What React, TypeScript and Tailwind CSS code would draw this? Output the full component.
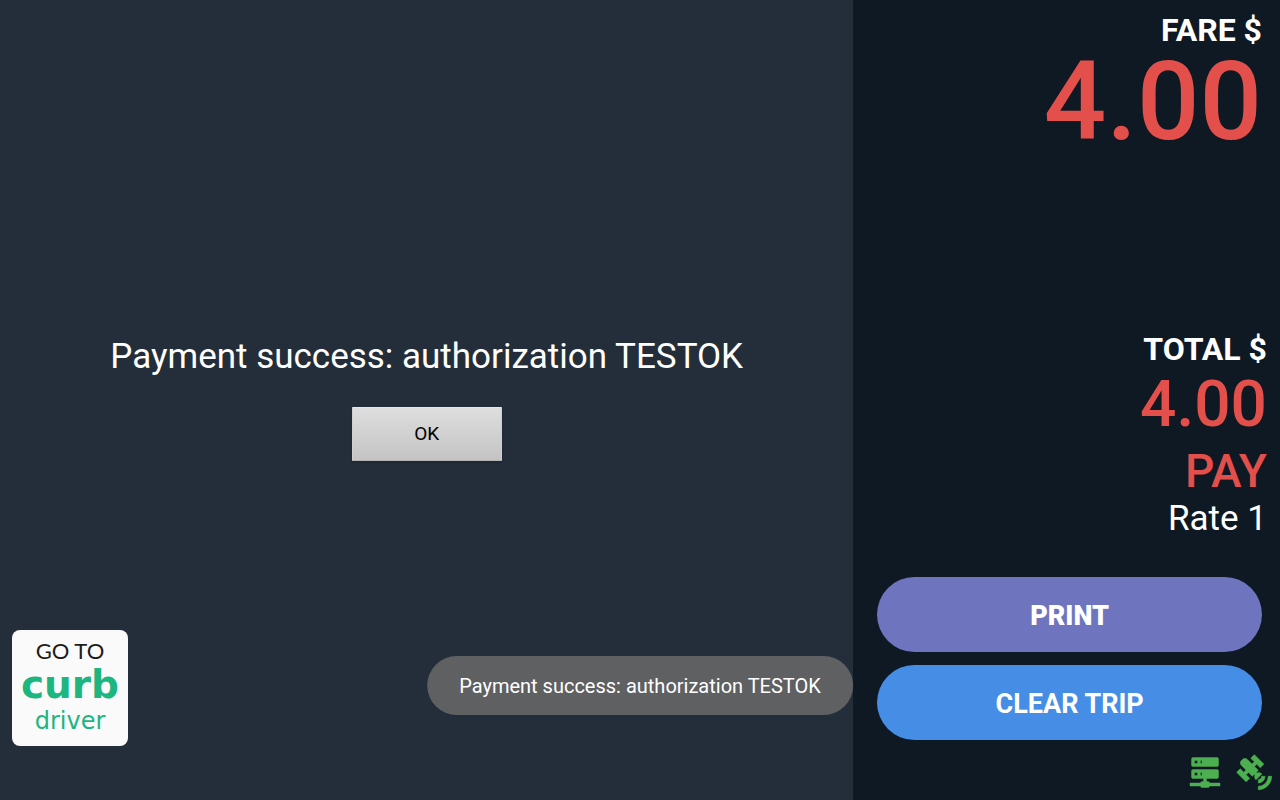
const MESSAGE = 'Payment success: authorization TESTOK';

const ServerIcon = () => (
  <svg viewBox="0 0 24 24" className="h-9 w-9" fill="currentColor" stroke="currentColor" strokeWidth="0.3" aria-hidden="true">
    <path d="M13,19H14A1,1 0 0,1 15,20H22V22H15A1,1 0 0,1 14,23H10A1,1 0 0,1 9,22H2V20H9A1,1 0 0,1 10,19H11V17H4A1,1 0 0,1 3,16V12A1,1 0 0,1 4,11H20A1,1 0 0,1 21,12V16A1,1 0 0,1 20,17H13V19M4,3H20A1,1 0 0,1 21,4V8A1,1 0 0,1 20,9H4A1,1 0 0,1 3,8V4A1,1 0 0,1 4,3M9,7H10V5H9V7M9,15H10V13H9V15M5,5V7H7V5H5M5,13V15H7V13H5Z" />
  </svg>
);

const SatelliteIcon = () => (
  <svg viewBox="0 0 24 24" className="h-10 w-10" fill="currentColor" stroke="currentColor" strokeWidth="0.4" aria-hidden="true">
    <path d="M11.62,1L17.28,6.67L15.16,8.79L13.04,6.67L11.62,8.09L13.95,10.41L12.79,11.58L13.24,12.04C14.17,11.61 15.31,11.77 16.07,12.54L12.54,16.07C11.77,15.31 11.61,14.17 12.04,13.24L11.58,12.79L10.41,13.95L8.09,11.62L6.67,13.04L8.79,15.16L6.67,17.28L1,11.62L3.14,9.5L5.26,11.62L6.67,10.21L3.84,7.38C3.06,6.6 3.06,5.33 3.84,4.55L4.55,3.84C5.33,3.06 6.6,3.06 7.38,3.84L10.21,6.67L11.62,5.26L9.5,3.14L11.62,1M18,14A4,4 0 0,1 14,18V16A2,2 0 0,0 16,14H18M22,14A8,8 0 0,1 14,22V20A6,6 0 0,0 20,14H22Z" />
  </svg>
);

const DriverLink = () => (
  <a
    href="#driver"
    className="flex h-[116px] w-[116px] flex-col items-center rounded-lg bg-[#fafafa] pt-[9px] text-[#1db580]"
  >
    <span className="font-['Lato',sans-serif] text-[22px] leading-6 text-[#1c1c1c]">GO TO</span>
    <span className="font-['DejaVu_Sans',sans-serif] text-[39px] leading-11 font-bold">curb</span>
    <span className="font-['DejaVu_Sans',sans-serif] text-2xl leading-7">driver</span>
  </a>
);

const PaymentPanel = () => (
  <main className="grid grid-rows-[1fr_auto_1fr] bg-[#242e3a] px-3 pb-1">
    <div />
    <div className="flex flex-col items-center gap-7">
      <p className="text-[35px] leading-11">{MESSAGE}</p>
      <button
        type="button"
        className="h-[54px] w-[150px] rounded-[1px] border border-x-[#d0d0d0] border-t-[#e6e6e6] border-b-[#b4b4b4] bg-linear-to-b from-[#dedede] to-[#c4c4c4] text-[19px] text-black shadow-sm"
      >
        OK
      </button>
    </div>
    <div className="flex items-end pb-[50px]">
      <DriverLink />
    </div>
  </main>
);

const MeterPanel = () => (
  <aside className="flex flex-col bg-[#0f1923] pt-3.5 pb-[7px]">
    <div className="flex flex-col items-end gap-2 pr-[18px]">
      <h2 className="text-[32px] leading-8 font-bold">FARE $</h2>
      <p className="text-[110px] leading-24 font-medium text-[#e34f4a]">4.00</p>
    </div>

    <div className="mt-auto flex flex-col items-end pr-[13px]">
      <h2 className="text-[32px] leading-8 font-bold">TOTAL $</h2>
      <p className="mt-3 text-[64px] leading-14 font-medium text-[#e34f4a]">4.00</p>
      <p className="mt-[18px] text-[46px] leading-10 font-medium text-[#e34f4a]">PAY</p>
      <p className="mt-2 text-[35px] leading-10">Rate 1</p>
    </div>

    <div className="mt-[38px] flex flex-col gap-[13px] pr-[18px] pl-6 text-[27px] font-bold">
      <button type="button" className="h-[75px] rounded-full bg-[#6f74be] pt-[3px] font-black">
        PRINT
      </button>
      <button type="button" className="h-[75px] rounded-full bg-[#468ee5] pt-[3px]">
        CLEAR TRIP
      </button>
    </div>

    <div className="mt-[13px] flex items-start justify-end gap-3 pr-[5px] text-[#4caf50]">
      <ServerIcon />
      <SatelliteIcon />
    </div>
  </aside>
);

const App = () => {
  return (
    <div className="relative grid min-h-screen grid-cols-[2fr_1fr] font-['Roboto',sans-serif] text-white">
      <PaymentPanel />
      <MeterPanel />

      {/* Toast */}
      <div
        role="status"
        className="absolute bottom-[85px] left-1/2 -translate-x-1/2 rounded-full bg-[#5f6062] px-8 pt-[17px] pb-[15px] text-xl leading-[27px] whitespace-nowrap"
      >
        {MESSAGE}
      </div>
    </div>
  );
};

export default App;
